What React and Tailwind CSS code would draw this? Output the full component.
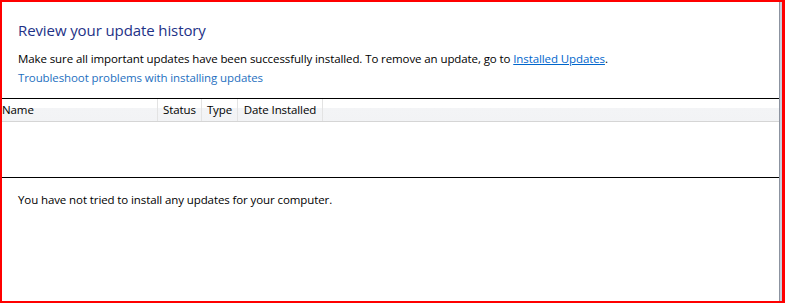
export default function App() {
  const font = { fontFamily: '"Open Sans", "Noto Sans", sans-serif' };
  return (
    <div className="w-[785px] h-[303px] bg-[#ff0000] pt-[2px] pl-[2px] pb-[2px] pr-[3px] flex overflow-hidden" style={font}>
      <div className="flex-1 bg-white flex flex-col">
        <div className="pl-[16px] pt-[17px]">
          <h1 className="text-[15px] leading-[22px] tracking-[-0.1px] text-[#1e3287] font-normal">Review your update history</h1>
          <p className="mt-[10px] text-[11.5px] leading-[16px] tracking-[-0.1px] text-black">
            Make sure all important updates have been successfully installed. To remove an update, go to{' '}
            <span className="text-[#0066cc] underline">Installed Updates</span>.
          </p>
          <p className="mt-[3px] text-[11.5px] leading-[16px] tracking-[-0.1px] text-[#1e6fc0]">Troubleshoot problems with installing updates</p>
        </div>
        <div className="mt-[12px] border-t border-black" />
        <div className="flex h-[23px] border-b border-[#d5d5d5] bg-[linear-gradient(to_bottom,#ffffff_0%,#ffffff_40%,#f3f4f6_41%,#f2f3f5_100%)] text-[11.5px] tracking-[-0.1px] text-black">
          <div className="w-[156px] border-r border-[#e3e3e3] flex items-center leading-[16px]">Name</div>
          <div className="w-[44px] border-r border-[#e3e3e3] flex items-center justify-center leading-[16px]">Status</div>
          <div className="w-[36px] border-r border-[#e3e3e3] flex items-center justify-center leading-[16px]">Type</div>
          <div className="w-[85px] border-r border-[#e3e3e3] flex items-center justify-center leading-[16px]">Date Installed</div>
          <div className="flex-1" />
        </div>
        <div className="h-[55px]" />
        <div className="border-t border-black" />
        <p className="pl-[16px] pt-[14px] text-[11.5px] leading-[16px] tracking-[-0.1px] text-black">You have not tried to install any updates for your computer.</p>
      </div>
      <div className="w-[3px] flex">
        <div className="w-px bg-[#8c93a0]" />
        <div className="w-[2px] bg-[#c6cfdc]" />
      </div>
    </div>
  );
}
